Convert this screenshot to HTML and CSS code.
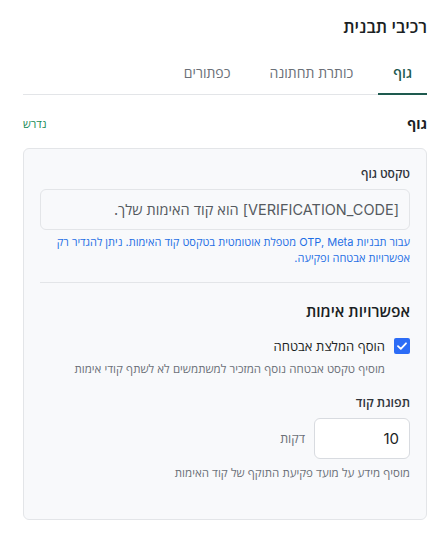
FILE: index.html
```html
<!DOCTYPE html>
<html lang="he" dir="rtl">
<head>
<meta charset="utf-8">
<link rel="stylesheet" href="styles.css">
</head>
<body>
<div class="page">
  <h1 class="title">רכיבי תבנית</h1>
  <div class="tabs">
    <div class="tab active">גוף</div>
    <div class="tab">כותרת תחתונה</div>
    <div class="tab">כפתורים</div>
  </div>
  <div class="section-head">
    <h2 class="section-title">גוף</h2>
    <span class="required">נדרש</span>
  </div>
  <div class="card">
    <div class="label">טקסט גוף</div>
    <div class="text-input">[VERIFICATION_CODE] הוא קוד האימות שלך.</div>
    <p class="info">עבור תבניות OTP, Meta מטפלת אוטומטית בטקסט קוד האימות. ניתן להגדיר רק אפשרויות אבטחה ופקיעה.</p>
    <div class="divider"></div>
    <h3 class="sub-title">אפשרויות אימות</h3>
    <label class="check-row">
      <span class="checkbox"><svg width="10" height="8" viewBox="0 0 10 8"><path d="M1 4.2 L3.8 6.8 L9 1.3" fill="none" stroke="#fff" stroke-width="1.8" stroke-linecap="round" stroke-linejoin="round"/></svg></span>
      <span class="check-label">הוסף המלצת אבטחה</span>
    </label>
    <p class="hint indent">מוסיף טקסט אבטחה נוסף המזכיר למשתמשים לא לשתף קודי אימות</p>
    <div class="label expiry-label">תפוגת קוד</div>
    <div class="expiry-row">
      <div class="num-input">10</div>
      <span class="unit">דקות</span>
    </div>
    <p class="hint">מוסיף מידע על מועד פקיעת התוקף של קוד האימות</p>
  </div>
</div>
</body>
</html>
```
FILE: styles.css
```css
* { box-sizing: border-box; }
html, body { margin: 0; padding: 0; background: #fff; }
body {
  font-family: "Inter", "Open Sans", "Noto Sans", sans-serif;
  color: #1f2328;
  direction: rtl;
}
.page {
  padding: 14px 14px 0 23px;
}
.title {
  margin: 0;
  font-size: 17px;
  font-weight: 600;
  line-height: 26px;
  color: #1b1f24;
}
.tabs {
  display: flex;
  gap: 11px;
  margin-top: 19px;
  border-bottom: 1px solid #e3e5e8;
}
.tab {
  padding: 0 14px;
  height: 36px;
  line-height: 28px;
  font-size: 14px;
  color: #6b7078;
  font-weight: 500;
  border-bottom: 2px solid transparent;
  margin-bottom: -1px;
}
.tab.active {
  padding: 0 15px;
  color: #1e5a4f;
  font-weight: 600;
  border-bottom-color: #1e5a4f;
}
.section-head {
  display: flex;
  justify-content: space-between;
  align-items: center;
  margin-top: 18px;
  height: 20px;
}
.section-title {
  margin: 0;
  font-size: 14px;
  font-weight: 700;
  color: #1b1f24;
}
.required {
  font-size: 11px;
  font-weight: 500;
  color: #178a55;
}
.card {
  margin-top: 15px;
  background: #f8f9fb;
  border: 1px solid #e3e5e8;
  border-radius: 6px;
  padding: 16px 16px 38px;
}
.label {
  font-size: 12px;
  font-weight: 600;
  color: #30353b;
  line-height: 18px;
}
.text-input {
  margin-top: 6px;
  height: 41px;
  border: 1px solid #e3e5e8;
  border-radius: 6px;
  background: #f8f9fb;
  padding: 0 10px;
  line-height: 39px;
  font-size: 14.5px;
  color: #555a60;
}
.info {
  margin: 4px 0 0;
  font-size: 11px;
  line-height: 16px;
  color: #1f6fe5;
}
.divider {
  height: 1px;
  background: #e3e5e8;
  margin-top: 16px;
}
.sub-title {
  margin: 18px 0 0;
  font-size: 15.5px;
  font-weight: 600;
  line-height: 22px;
  color: #1b1f24;
}
.check-row {
  display: flex;
  align-items: center;
  gap: 9px;
  margin-top: 14px;
}
.checkbox {
  width: 16px;
  height: 16px;
  background: #2c6cf6;
  border-radius: 2px;
  display: flex;
  align-items: center;
  justify-content: center;
}
.check-label {
  font-size: 13px;
  color: #1b1f24;
}
.hint {
  margin: 6px 0 0;
  font-size: 11.5px;
  line-height: 16px;
  color: #6b7078;
}
.hint.indent { margin-right: 25px; }
.expiry-label { margin-top: 17px; font-size: 12.5px; }
.expiry-row {
  display: flex;
  align-items: center;
  gap: 9px;
  margin-top: 6px;
}
.num-input {
  width: 96px;
  height: 41px;
  border: 1px solid #d8dbe0;
  border-radius: 6px;
  background: #fff;
  padding: 0 10px;
  line-height: 39px;
  font-size: 15px;
  color: #1b1f24;
}
.unit {
  font-size: 12.5px;
  color: #6b7078;
}
```
